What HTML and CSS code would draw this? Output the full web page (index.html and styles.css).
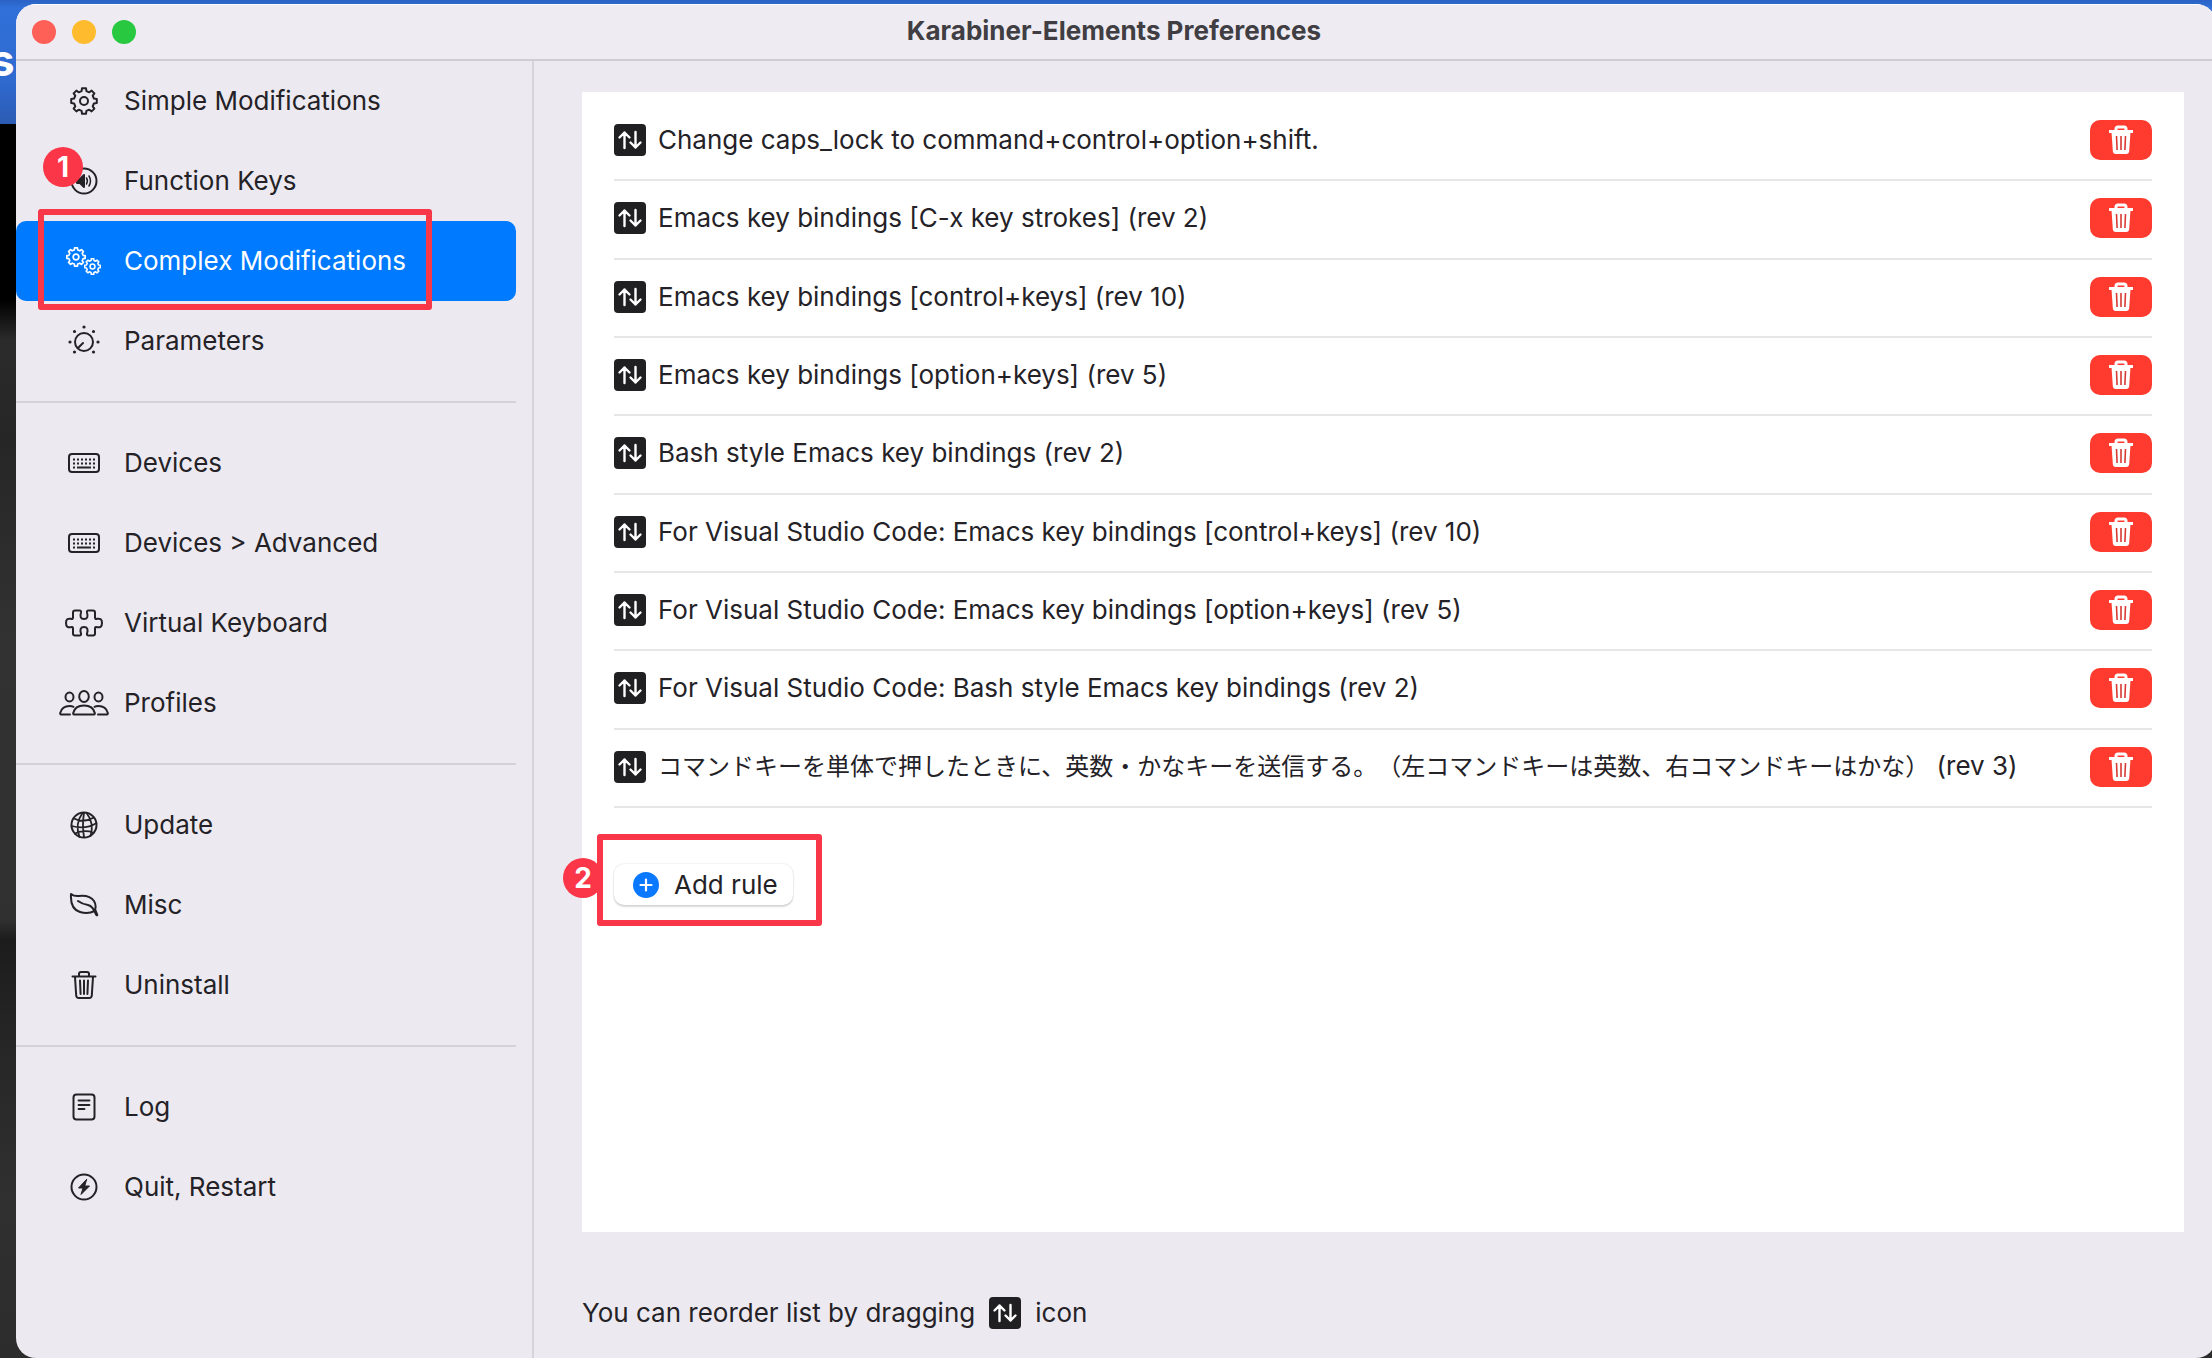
FILE: index.html
```html
<!DOCTYPE html>
<html lang="en">
<head>
<meta charset="utf-8">
<title>Karabiner-Elements Preferences</title>
<link rel="stylesheet" href="styles.css">
</head>
<body>
<svg class="defs" aria-hidden="true">
  <symbol id="gear" viewBox="-14 -14 28 28">
    <path d="M-2.4-9.9L-2-12.8H2L2.4-9.9L5.3-8.7L7.6-10.4L10.4-7.6L8.7-5.3L9.9-2.4L12.8-2V2L9.9 2.4L8.7 5.3L10.4 7.6L7.6 10.4L5.3 8.7L2.4 9.9L2 12.8H-2L-2.4 9.9L-5.3 8.7L-7.6 10.4L-10.4 7.6L-8.7 5.3L-9.9 2.4L-12.8 2V-2L-9.9-2.4L-8.7-5.3L-10.4-7.6L-7.6-10.4L-5.3-8.7Z"/>
    <circle r="4"/>
  </symbol>
  <symbol id="keyboard" viewBox="0 0 34 22">
    <rect x="2" y="2" width="30" height="18" rx="3"/>
    <path d="M6 7.5h22M6 11.5h22" stroke-dasharray="2 2" stroke-width="2"/>
    <path d="M6 15.5h2M10 15.5h14M26 15.5h2"/>
  </symbol>
  <symbol id="trash" viewBox="0 0 26 30">
    <path d="M1.500 6.500h23M8 6V4q0-2 2-2h6q2 0 2 2v2M4 7l1.200 18.500q.2 2.500 2.600 2.500h10.400q2.400 0 2.600-2.500L22 7M9 10.500l.6 13.500M13 10.500v13.500M17 10.500l-.6 13.500"/>
  </symbol>
  <symbol id="trash-fill" viewBox="0 0 26 30">
    <path d="M1 6.500h24M8 6V4q0-2 2-2h6q2 0 2 2v2" fill="none" stroke="#fff" stroke-width="3"/>
    <path d="M3.500 7h19l-1.300 19q-.2 3-3 3H7.800q-2.800 0-3-3z" fill="#fff"/>
    <path d="M8.500 11l.6 14M13 11v14M17.500 11l-.6 14" stroke="#d83a34" stroke-width="1.600" fill="none"/>
  </symbol>
  <symbol id="reorder" viewBox="0 0 32 32">
    <rect width="32" height="32" rx="4" fill="#202022"/>
    <path d="M10.500 24V8.500M5.500 13.500l5-5 5 5M21.500 8v15.500M16.500 18.500l5 5 5-5" fill="none" stroke="#fff" stroke-width="2.400" stroke-linecap="round" stroke-linejoin="round"/>
  </symbol>
</svg>

<span class="desktop-text" aria-hidden="true">s</span>

<div class="window">
  <header class="titlebar">
    <div class="lights">
      <button class="light close" aria-label="Close"></button>
      <button class="light minimize" aria-label="Minimize"></button>
      <button class="light zoom" aria-label="Zoom"></button>
    </div>
    <h1>Karabiner-Elements Preferences</h1>
  </header>

  <div class="body">
    <nav class="sidebar">
      <a class="item" href="#simple"><span class="icon"><svg width="28" height="28"><use href="#gear"/></svg></span>Simple Modifications</a>
      <a class="item" href="#function"><span class="icon"><svg width="28" height="28" viewBox="0 0 28 28"><circle cx="14" cy="14" r="12.500"/><path d="M7 12h3l4-4v12l-4-4H7z" fill="currentColor"/><path d="M16.500 11q1.800 3 0 6M19 9q3 5 0 10" stroke-width="1.500"/></svg></span>Function Keys<span class="badge badge-one">1</span></a>
      <a class="item selected" href="#complex" aria-current="page"><span class="icon"><svg width="36" height="30" viewBox="0 0 36 30"><use href="#gear" x="0" y="1" width="20" height="20" stroke-width="2.400"/><use href="#gear" x="18" y="12" width="17" height="17" stroke-width="2.600"/></svg></span>Complex Modifications<span class="frame frame-one"></span></a>
      <a class="item" href="#parameters"><span class="icon"><svg width="32" height="32" viewBox="-16 -16 32 32"><circle cy="1" r="9"/><path d="M-1 2l-5 5"/><path d="M0-14h0M-9.500-9.500h0M9.500-9.500h0M-14 1h0M14 1h0M-9.500 11h0M9.500 11h0" stroke-width="3.200"/></svg></span>Parameters</a>
      <hr>
      <a class="item" href="#devices"><span class="icon"><svg width="34" height="22"><use href="#keyboard"/></svg></span>Devices</a>
      <a class="item" href="#advanced"><span class="icon"><svg width="34" height="22"><use href="#keyboard"/></svg></span>Devices &gt; Advanced</a>
      <a class="item" href="#virtual"><span class="icon"><svg width="38" height="28" viewBox="0 0 38 28"><path d="M8 3.500q0-2 2-2h4.500q2 0 1.500 2-2 6.500 3 6.500t3-6.500q-.5-2 1.500-2H28q2 0 2 2v5q0 2 2 1.300 5-1 5 4.200t-5 4.200q-2-.7-2 1.300v5q0 2-2 2h-4.500q-2 0-1.500-2 2-6.500-3-6.500t-3 6.500q.5 2-1.500 2H10q-2 0-2-2v-5q0-2-2-1.300-5 1-5-4.200t5-4.200q2 .7 2-1.300z"/></svg></span>Virtual Keyboard</a>
      <a class="item" href="#profiles"><span class="icon"><svg width="50" height="28" viewBox="0 0 50 28"><ellipse cx="25" cy="7.500" rx="4.800" ry="5.500"/><path d="M15 25.500q-1 0-.8-1.500Q16 16.500 25 16.500t10.800 7.500q.2 1.500-.8 1.500z"/><ellipse cx="10.500" cy="8" rx="4" ry="4.500"/><ellipse cx="39.500" cy="8" rx="4" ry="4.500"/><path d="M11 25.500H2q-1 0-.8-1.500Q3 17 10.500 17q2.500 0 4 .8M39 25.500h9q1 0 .8-1.500Q47 17 39.500 17q-2.500 0-4 .8"/></svg></span>Profiles</a>
      <hr>
      <a class="item" href="#update"><span class="icon"><svg width="28" height="28" viewBox="0 0 28 28"><circle cx="14" cy="14" r="12.500"/><path d="M12.500 2Q4.500 13 9.500 26M14 2q-2 12 0 24M16.500 2q8 10 4 23M4 7.500q9 5 20-1M1.500 15q14 4 25-3M5 22.500q8-4 19-1" stroke-width="1.800"/></svg></span>Update</a>
      <a class="item" href="#misc"><span class="icon"><svg width="30" height="26" viewBox="0 0 30 26"><path d="M2 2q3 2.500 8 2 11-1 15 5 3 5 .5 10Q19 22.500 11 20 1 17 2 2zM9 9q4 3 10 4 5 1 8 9.500"/><path d="M26 18l2 5" stroke-width="2.600"/></svg></span>Misc</a>
      <a class="item" href="#uninstall"><span class="icon"><svg width="26" height="30"><use href="#trash"/></svg></span>Uninstall</a>
      <hr>
      <a class="item" href="#log"><span class="icon"><svg width="24" height="28" viewBox="0 0 24 28"><rect x="1.500" y="1.500" width="21" height="25" rx="3"/><path d="M6.500 7.500h11M6.500 12h11M6.500 16h6" stroke-width="1.800"/></svg></span>Log</a>
      <a class="item" href="#quit"><span class="icon"><svg width="28" height="28" viewBox="0 0 28 28"><circle cx="14" cy="14" r="12.500"/><path d="M16.500 6.500L8.500 15h4.500l-2 6.500L19.500 13H15z" fill="currentColor" stroke-width="1"/></svg></span>Quit, Restart</a>
    </nav>

    <main class="content">
      <section class="panel">
        <ul class="rules">
          <li><svg width="32" height="32"><use href="#reorder"/></svg><span class="name">Change caps_lock to command+control+option+shift.</span><button class="delete" aria-label="Delete rule"><svg width="26" height="30"><use href="#trash-fill"/></svg></button></li>
          <li><svg width="32" height="32"><use href="#reorder"/></svg><span class="name">Emacs key bindings [C-x key strokes] (rev 2)</span><button class="delete" aria-label="Delete rule"><svg width="26" height="30"><use href="#trash-fill"/></svg></button></li>
          <li><svg width="32" height="32"><use href="#reorder"/></svg><span class="name">Emacs key bindings [control+keys] (rev 10)</span><button class="delete" aria-label="Delete rule"><svg width="26" height="30"><use href="#trash-fill"/></svg></button></li>
          <li><svg width="32" height="32"><use href="#reorder"/></svg><span class="name">Emacs key bindings [option+keys] (rev 5)</span><button class="delete" aria-label="Delete rule"><svg width="26" height="30"><use href="#trash-fill"/></svg></button></li>
          <li><svg width="32" height="32"><use href="#reorder"/></svg><span class="name">Bash style Emacs key bindings (rev 2)</span><button class="delete" aria-label="Delete rule"><svg width="26" height="30"><use href="#trash-fill"/></svg></button></li>
          <li><svg width="32" height="32"><use href="#reorder"/></svg><span class="name">For Visual Studio Code: Emacs key bindings [control+keys] (rev 10)</span><button class="delete" aria-label="Delete rule"><svg width="26" height="30"><use href="#trash-fill"/></svg></button></li>
          <li><svg width="32" height="32"><use href="#reorder"/></svg><span class="name">For Visual Studio Code: Emacs key bindings [option+keys] (rev 5)</span><button class="delete" aria-label="Delete rule"><svg width="26" height="30"><use href="#trash-fill"/></svg></button></li>
          <li><svg width="32" height="32"><use href="#reorder"/></svg><span class="name">For Visual Studio Code: Bash style Emacs key bindings (rev 2)</span><button class="delete" aria-label="Delete rule"><svg width="26" height="30"><use href="#trash-fill"/></svg></button></li>
          <li><svg width="32" height="32"><use href="#reorder"/></svg><span class="name"><span lang="ja">コマンドキーを単体で押したときに、英数・かなキーを送信する。（左コマンドキーは英数、右コマンドキーはかな）</span> (rev 3)</span><button class="delete" aria-label="Delete rule"><svg width="26" height="30"><use href="#trash-fill"/></svg></button></li>
        </ul>
        <div class="add-row">
          <button class="add"><svg width="26" height="26" viewBox="0 0 26 26"><circle cx="13" cy="13" r="13" fill="#0a78ff"/><path d="M13 7.500v11M7.500 13h11" stroke="#fff" stroke-width="2.200" stroke-linecap="round"/></svg>Add rule</button>
          <span class="frame frame-two"></span>
          <span class="badge badge-two">2</span>
        </div>
      </section>
      <p class="hint">You can reorder list by dragging <svg width="32" height="32"><use href="#reorder"/></svg> icon</p>
    </main>
  </div>
</div>
</body>
</html>
```
FILE: styles.css
```css
* {
  box-sizing: border-box;
}

body {
  margin: 0;
  padding: 4px 0 0 16px;
  height: 100vh;
  overflow: hidden;
  position: relative;
  background: linear-gradient(#2a62c4 0, #3070d8 8px, #2f6ad0 80px, #2c5cb4 124px, #000 124px, #000 300px, #2b2b2b 340px, #262626 440px, #323232 640px, #303030 920px, #1c1c1c 940px, #262626 1040px, #303030 1200px, #2c2c2c 100%);
  color: #242227;
  font-family: Inter, "Noto Sans CJK JP", sans-serif;
  font-size: 26px;
  line-height: 32px;
}

button {
  font: inherit;
  color: inherit;
  border: 0;
  padding: 0;
}

.defs {
  position: absolute;
  width: 0;
  height: 0;
}

.desktop-text {
  position: absolute;
  left: -10px;
  top: 44px;
  color: #fff;
  font-size: 44px;
  font-weight: 700;
}

.window {
  position: relative;
  display: flex;
  flex-direction: column;
  height: 100%;
  margin-right: -4px;
  border-radius: 20px;
  overflow: hidden;
  background: #eceaf0;
}

.titlebar {
  display: grid;
  grid-template-columns: 1fr auto 1fr;
  align-items: center;
  height: 57px;
  padding: 0 20px 0 16px;
  border-top: 1px solid #fff;
  border-bottom: 2px solid #cfcdd3;
  background: #eeecf2;
}

.titlebar h1 {
  margin: 0;
  padding-bottom: 2px;
  color: #403e43;
  font-size: 26px;
  font-weight: 700;
}

.lights {
  display: flex;
  gap: 16px;
}

.light {
  width: 24px;
  height: 24px;
  border-radius: 50%;
}

.close { background: #fe5f57; }
.minimize { background: #febb2e; }
.zoom { background: #28c840; }

.body {
  display: flex;
  flex: 1;
  min-height: 0;
}

.sidebar {
  flex: none;
  width: 518px;
  padding-right: 16px;
  border-right: 2px solid #d6d4da;
}

.sidebar hr {
  height: 2px;
  margin: 20px 0;
  border: 0;
  background: #d4d2d8;
}

.item {
  position: relative;
  display: flex;
  align-items: center;
  gap: 12px;
  height: 80px;
  padding-left: 40px;
  border-radius: 10px;
  color: inherit;
  text-decoration: none;
}

.selected {
  background: #007aff;
  color: #fff;
}

.icon {
  display: flex;
  justify-content: center;
  width: 56px;
  fill: none;
  stroke: currentColor;
  stroke-width: 2;
  stroke-linecap: round;
  stroke-linejoin: round;
}

#keyboard path {
  stroke-linecap: butt;
}

.badge {
  position: absolute;
  width: 40px;
  height: 40px;
  border-radius: 50%;
  background: #fb3648;
  color: #fff;
  font-size: 28px;
  font-weight: 700;
  line-height: 40px;
  text-align: center;
}

.frame {
  position: absolute;
  border: 6px solid #f83848;
  border-radius: 3px;
}

.badge-one {
  left: 27px;
  top: 6px;
}

.frame-one {
  z-index: 1;
  left: 22px;
  top: -12px;
  width: 394px;
  height: 101px;
}

.content {
  display: flex;
  flex: 1;
  flex-direction: column;
  min-width: 0;
  padding: 31px 32px 0 48px;
}

.panel {
  flex: 1;
  padding: 11px 32px;
  background: #fff;
}

.rules {
  display: grid;
  grid-auto-rows: 1fr;
  height: 705px;
  margin: 0;
  padding: 0;
  list-style: none;
}

.rules li {
  display: flex;
  align-items: center;
  gap: 12px;
  padding-bottom: 2px;
  border-bottom: 2px solid #e6e6e6;
}

.name {
  flex: 1;
  white-space: nowrap;
}

.name [lang="ja"] {
  font-size: 24px;
  text-spacing-trim: space-all;
}

.delete {
  display: flex;
  align-items: center;
  justify-content: center;
  width: 62px;
  height: 40px;
  border-radius: 10px;
  background: #ff3b30;
}

.add-row {
  position: relative;
  margin-top: 56px;
}

.add {
  display: flex;
  align-items: center;
  gap: 15px;
  height: 41px;
  padding: 0 15px 0 19px;
  border-radius: 10px;
  background: #fff;
  box-shadow: 0 0 2px rgba(0, 0, 0, 0.16), 0 2px 2px rgba(0, 0, 0, 0.14);
}

.frame-two {
  left: -17px;
  top: -30px;
  width: 225px;
  height: 92px;
}

.badge-two {
  left: -51px;
  top: -6px;
}

.hint {
  display: flex;
  align-items: center;
  gap: 14px;
  height: 126px;
  margin: 0;
  padding-top: 36px;
}
```
